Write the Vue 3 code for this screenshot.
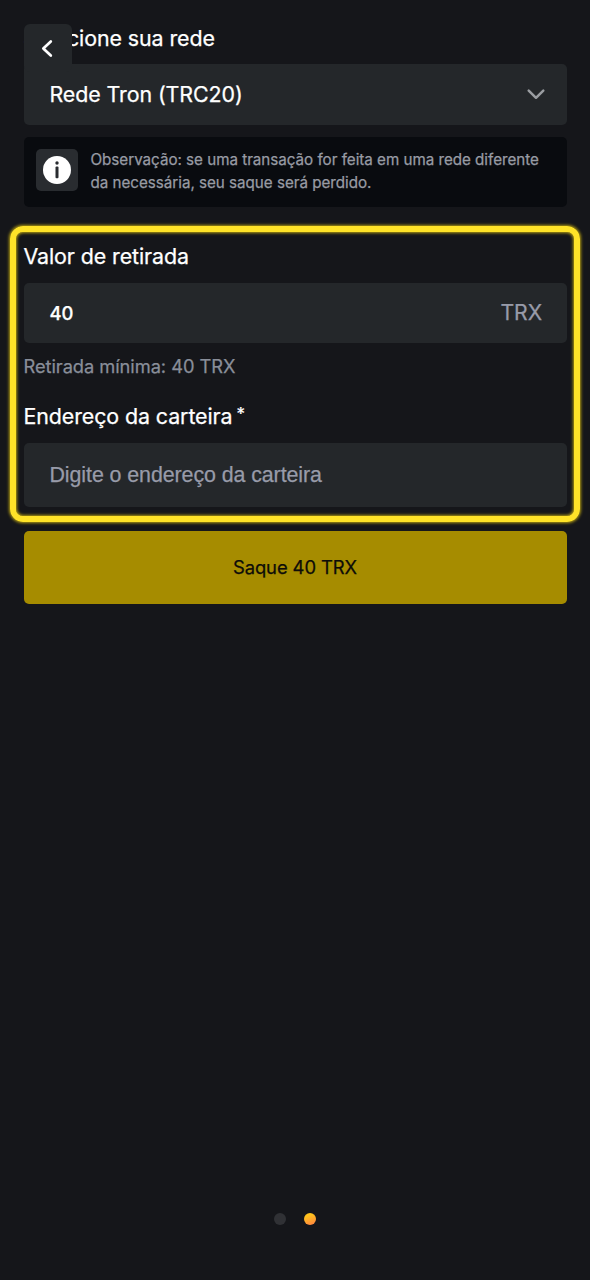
<script setup>
import { ref } from 'vue'

const network = ref('Rede Tron (TRC20)')
const amount = ref('40')
const address = ref('')
</script>

<template>
  <main class="screen">
    <button class="back" aria-label="Voltar">
      <svg width="48" height="48" viewBox="0 0 48 48">
        <path d="M26.8 17.4 19.3 24.4 26.8 31.5" />
      </svg>
    </button>

    <h2 class="label label-network"><span>Selecione sua rede</span></h2>
    <div class="field network">
      <span class="network-name">{{ network }}</span>
      <svg class="chevron" width="20" height="14" viewBox="0 0 20 14">
        <path d="M2.7 3.7 10 10.8 17.3 3.7" />
      </svg>
    </div>

    <div class="note">
      <div class="note-icon">
        <svg width="42" height="42" viewBox="0 0 42 42">
          <circle cx="21" cy="21" r="14" fill="#fff" />
          <circle cx="21" cy="14" r="1.7" fill="#292c30" />
          <rect x="19.5" y="17.4" width="3" height="11.8" rx="1" fill="#292c30" />
        </svg>
      </div>
      <p class="note-text">
        <span>Observação: se uma transação for feita em uma rede diferente</span><br />
        <span>da necessária, seu saque será perdido.</span>
      </p>
    </div>

    <section class="highlight">
      <h2 class="label label-amount"><span>Valor de retirada</span></h2>
      <div class="field amount">
        <span class="amount-value">{{ amount }}</span>
        <span class="unit">TRX</span>
      </div>
      <p class="hint"><span>Retirada mínima: 40 TRX</span></p>
      <h2 class="label label-address"><span>Endereço da carteira</span><span class="star">*</span></h2>
      <div class="field address">
        <input v-model="address" placeholder="Digite o endereço da carteira" />
      </div>
    </section>

    <button class="submit"><span>Saque {{ amount }} TRX</span></button>

    <nav class="dots">
      <i class="dot"></i>
      <i class="dot active"></i>
    </nav>
  </main>
</template>

<style>
body {
  background: #15161a;
}
</style>

<style scoped>
* {
  box-sizing: border-box;
}
.screen {
  position: relative;
  display: flex;
  flex-direction: column;
  height: 1280px;
  padding: 24px 23.5px 55px;
  background: #15161a;
  color: #fff;
  font-family: Inter, "Liberation Sans", sans-serif;
  -webkit-text-stroke-width: 0.25px;
}
h2,
p {
  margin: 0;
}
button {
  border: 0;
  padding: 0;
  font-family: inherit;
}
.back {
  position: absolute;
  left: 24px;
  top: 24px;
  width: 48px;
  height: 48px;
  border-radius: 6px;
  background: #24272a;
}
.back svg {
  display: block;
}
.back path {
  fill: none;
  stroke: #fff;
  stroke-width: 2.7;
  stroke-linecap: round;
  stroke-linejoin: round;
}
.label {
  font-size: 21.4px;
  font-weight: 400;
  line-height: 28px;
  letter-spacing: -0.09px;
  white-space: nowrap;
}
.label-network {
  height: 40px;
}
.field {
  display: flex;
  align-items: center;
  justify-content: space-between;
  flex: none;
  padding: 0 24.5px 0 26px;
  border-radius: 5px;
  background: #24272a;
}
.network {
  height: 60.5px;
  padding-right: 20.5px;
  font-size: 21.4px;
  letter-spacing: -0.09px;
}
.chevron path {
  fill: none;
  stroke: #9a9da1;
  stroke-width: 2.5;
  stroke-linecap: round;
  stroke-linejoin: round;
}
.note {
  display: flex;
  flex: none;
  height: 69.5px;
  margin-top: 12.5px;
  padding: 12px 12.5px;
  gap: 12.5px;
  border-radius: 5px;
  background: #090b0f;
}
.note-icon {
  width: 42px;
  height: 42px;
  border-radius: 5px;
  background: #292c30;
}
.note-icon svg {
  display: block;
}
.note-text {
  color: #989ba4;
  font-size: 15.2px;
  line-height: 22.6px;
  letter-spacing: -0.02px;
  white-space: nowrap;
}
.highlight {
  flex: none;
  height: 295.5px;
  margin: 19.5px -13.5px 0;
  padding: 9.5px 7.5px 0;
  border: 6px solid #ffe328;
  border-radius: 13px;
  box-shadow: 0 0 3px 1px #b49e12, inset 0 0 3px 1px #b49e12;
}
.label-amount {
  height: 41.5px;
}
.amount {
  height: 60px;
}
.amount-value {
  font-size: 18.4px;
  font-weight: 500;
}
.unit {
  padding-bottom: 2px;
  color: #989ba9;
  font-size: 21.2px;
  letter-spacing: -0.09px;
}
.hint {
  height: 59px;
  padding-top: 9px;
  color: #898e99;
  font-size: 18.3px;
  line-height: 28px;
  letter-spacing: -0.06px;
}
.label-address {
  display: flex;
  height: 41px;
}
.star {
  margin-left: 4px;
  font-size: 17px;
  line-height: 24px;
}
.address {
  height: 63.5px;
}
.address input {
  width: 100%;
  padding: 2px 0 0;
  border: 0;
  outline: 0;
  background: transparent;
  color: #fff;
  font-family: "Liberation Sans", Arial, sans-serif;
  font-size: 21.4px;
  letter-spacing: -0.08px;
}
.address input::placeholder {
  color: #989ba9;
}
.submit {
  flex: none;
  height: 72.5px;
  margin-top: 9.5px;
  border-radius: 5px;
  background: #a68c00;
  color: #0d0c08;
  font-size: 18.4px;
  letter-spacing: -0.08px;
}
.dots {
  display: flex;
  justify-content: center;
  gap: 18px;
  margin-top: auto;
}
.dot {
  width: 12px;
  height: 12px;
  border-radius: 50%;
  background: #303135;
}
.active {
  background: linear-gradient(160deg, #ffc21c 25%, #ff873f 90%);
}
</style>
